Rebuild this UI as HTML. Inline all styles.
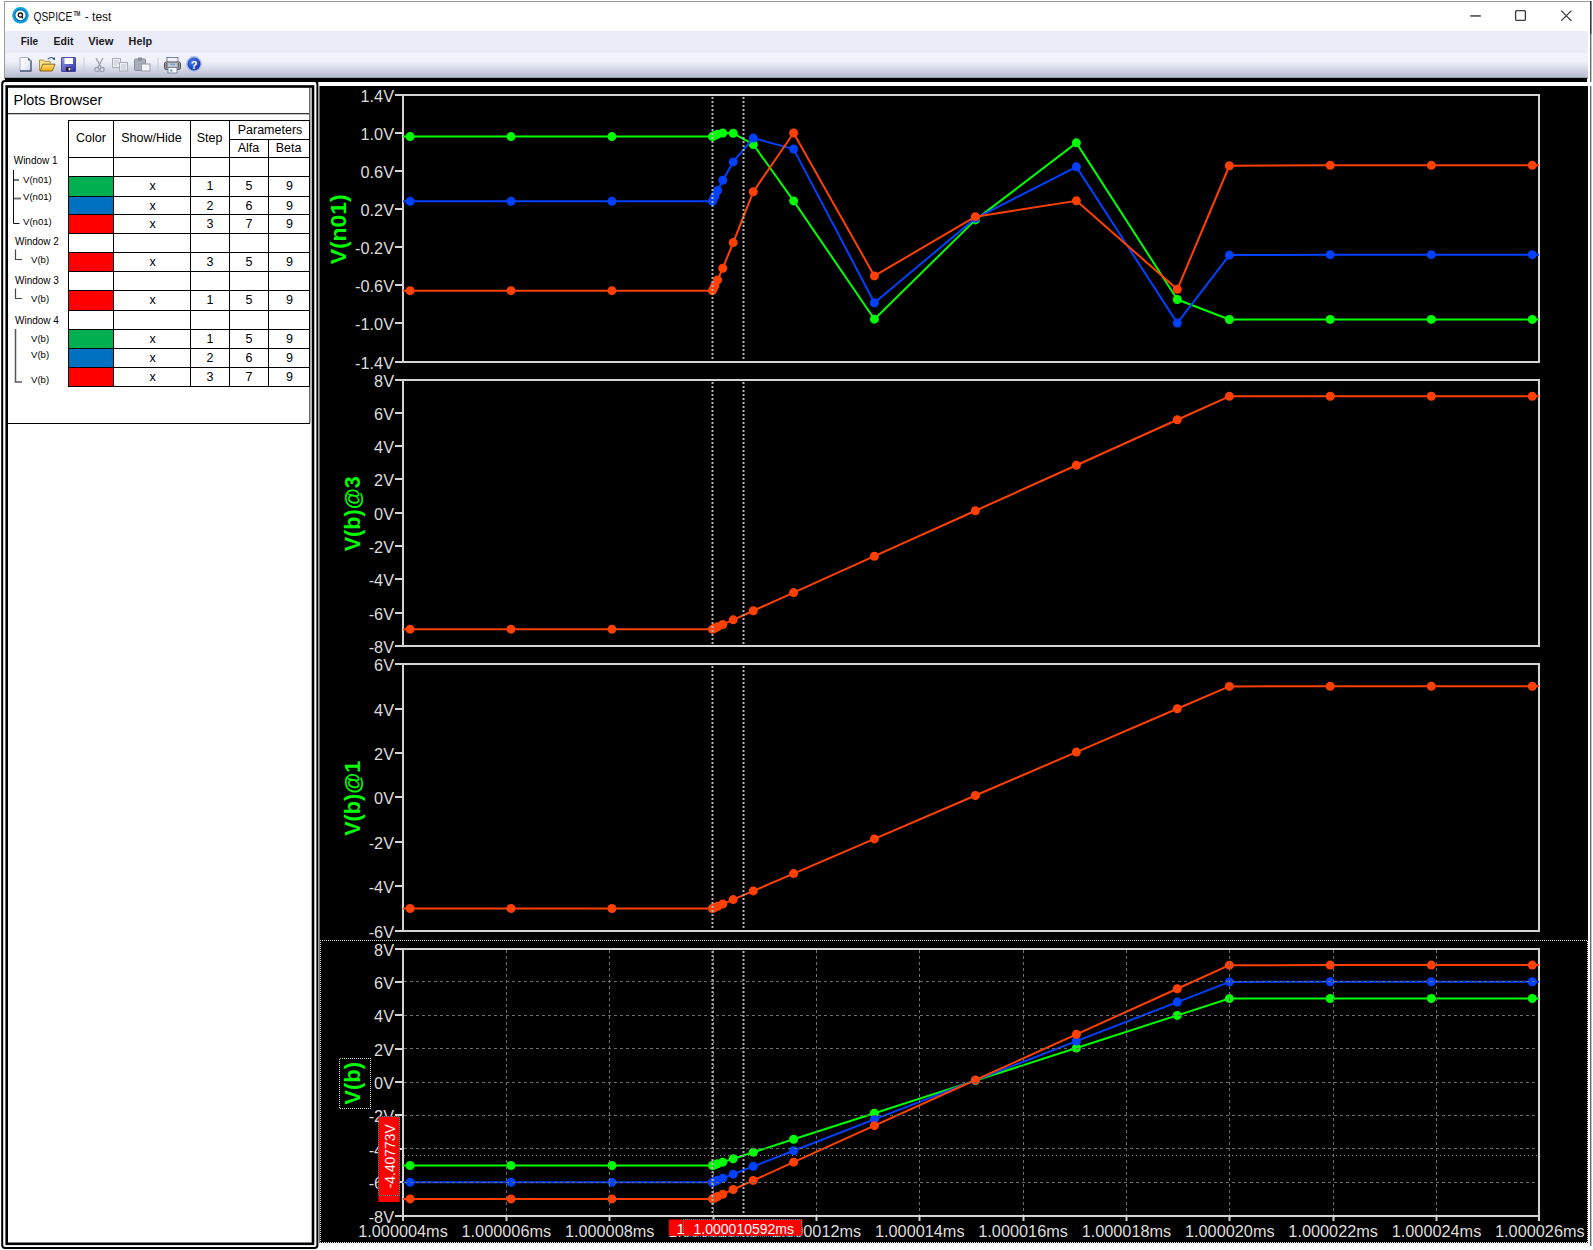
<!DOCTYPE html>
<html><head><meta charset="utf-8"><title>QSPICE - test</title>
<style>html,body{margin:0;padding:0;width:1593px;height:1250px;overflow:hidden;background:#fff;font-family:"Liberation Sans", sans-serif}</style>
</head><body>
<svg width="1593" height="1250" viewBox="0 0 1593 1250" style="position:absolute;left:0;top:0">
<defs><linearGradient id="tb" x1="0" y1="0" x2="0" y2="1"><stop offset="0" stop-color="#f4f6fb"/><stop offset="0.35" stop-color="#eef0f8"/><stop offset="0.75" stop-color="#c9ccdc"/><stop offset="1" stop-color="#b3b7cd"/></linearGradient><pattern id="dw" x="0" y="0" width="2" height="2" patternUnits="userSpaceOnUse"><rect x="0" y="0" width="1" height="1" fill="#dcdcdc"/><rect x="1" y="1" width="1" height="1" fill="#dcdcdc"/></pattern><pattern id="dc" x="0" y="0" width="2" height="2" patternUnits="userSpaceOnUse"><rect x="0" y="0" width="1" height="1" fill="#2a9aa8"/><rect x="1" y="1" width="1" height="1" fill="#2a9aa8"/></pattern><clipPath id="pc"><rect x="320" y="86" width="1268" height="1157"/></clipPath></defs>
<rect x="0" y="0" width="1593" height="1250" fill="#ffffff"/>
<rect x="4" y="1" width="1587" height="1" fill="#9a9a9a"/>
<rect x="4" y="1" width="1" height="78" fill="#9a9a9a"/>
<circle cx="20.5" cy="15.3" r="8.3" fill="#0ea2e4"/><circle cx="20.5" cy="15.3" r="5.6" fill="none" stroke="#0a5c8a" stroke-width="1.2" opacity="0.7"/><circle cx="20.5" cy="15.3" r="4.9" fill="#fff"/><circle cx="20.4" cy="15.1" r="2.1" fill="none" stroke="#111" stroke-width="1.3"/><line x1="21.6" y1="16.6" x2="23" y2="18.3" stroke="#111" stroke-width="1.3"/>
<text x="33.6" y="20.6" font-family='"Liberation Sans", sans-serif' font-size="12.8" fill="#111" textLength="38.6" lengthAdjust="spacingAndGlyphs">QSPICE</text>
<text x="73.4" y="15.6" font-family='"Liberation Sans", sans-serif' font-size="7.5" font-weight="bold" fill="#333" textLength="7" lengthAdjust="spacingAndGlyphs">TM</text>
<text x="84.8" y="20.6" font-family='"Liberation Sans", sans-serif' font-size="12.8" fill="#111" textLength="26.6" lengthAdjust="spacingAndGlyphs">- test</text>
<rect x="1470.3" y="15.2" width="10.5" height="1.5" fill="#404040"/>
<rect x="1515.6" y="10.6" width="9.8" height="9.8" rx="1.2" fill="none" stroke="#383838" stroke-width="1.3"/>
<path d="M1561.2 10.6 L1571.4 20.8 M1571.4 10.6 L1561.2 20.8" stroke="#333" stroke-width="1.2"/>
<rect x="5" y="31" width="1583" height="22" fill="#eaecf8"/>
<text x="20.7" y="45.4" font-family='"Liberation Sans", sans-serif' font-size="11.3" font-weight="bold" fill="#1a1a1a" textLength="17.4" lengthAdjust="spacingAndGlyphs">File</text>
<text x="53.6" y="45.4" font-family='"Liberation Sans", sans-serif' font-size="11.3" font-weight="bold" fill="#1a1a1a" textLength="19.8" lengthAdjust="spacingAndGlyphs">Edit</text>
<text x="88.2" y="45.4" font-family='"Liberation Sans", sans-serif' font-size="11.3" font-weight="bold" fill="#1a1a1a" textLength="25.2" lengthAdjust="spacingAndGlyphs">View</text>
<text x="128.6" y="45.4" font-family='"Liberation Sans", sans-serif' font-size="11.3" font-weight="bold" fill="#1a1a1a" textLength="23.4" lengthAdjust="spacingAndGlyphs">Help</text>
<rect x="5" y="53" width="1583" height="26" fill="url(#tb)"/>
<rect x="5" y="77" width="1583" height="1" fill="#9a9cac"/>
<rect x="5" y="78" width="1582" height="4" fill="#000"/>
<defs><linearGradient id="docg" x1="0" y1="0" x2="1" y2="1"><stop offset="0" stop-color="#ffffff"/><stop offset="0.5" stop-color="#f4f6fc"/><stop offset="1" stop-color="#c8d2e8"/></linearGradient><linearGradient id="fldg" x1="0" y1="0" x2="0" y2="1"><stop offset="0" stop-color="#ffe27a"/><stop offset="1" stop-color="#f0a818"/></linearGradient><linearGradient id="flpg" x1="0" y1="0" x2="1" y2="1"><stop offset="0" stop-color="#9a9af0"/><stop offset="1" stop-color="#2a2aa8"/></linearGradient></defs>
<path d="M20 57.5 h8 l3 3 v10.5 h-11 z" fill="url(#docg)" stroke="#a8b4cc" stroke-width="1"/><path d="M31 60.5 v10.5 h-11" fill="none" stroke="#4a5a78" stroke-width="1.3"/><path d="M28 57.5 l3 3 h-3 z" fill="#4a5a78"/>
<path d="M39.5 70.5 V60 h4 l1.2 1.3 h5.3 v2.7" fill="#f6e08a" stroke="#a88a30" stroke-width="0.9"/><path d="M40 71 l2.8 -6.8 h12.2 l-2.8 6.8 z" fill="url(#fldg)" stroke="#7a5a10" stroke-width="0.9"/><path d="M47.8 59.2 q3 -3 5.8 -0.8" fill="none" stroke="#3a5a98" stroke-width="1.1"/><path d="M55 57.2 l-0.3 3 l-2.6 -1.4 z" fill="#23406e"/>
<rect x="61.5" y="57.5" width="14" height="14" rx="0.5" fill="url(#flpg)" stroke="#3030a0" stroke-width="0.8"/><rect x="64.5" y="58" width="8.5" height="6" fill="#fff"/><rect x="66" y="67" width="5" height="4.2" fill="#222"/><rect x="68.6" y="67.8" width="1.8" height="2.6" fill="#f4f4f4"/>
<rect x="83.5" y="57.5" width="1" height="16" fill="#c8cad8"/>
<rect x="157.5" y="57.5" width="1" height="16" fill="#c8cad8"/>
<path d="M96 58 l5 9 M103 58 l-5 9" stroke="#9aa0ac" stroke-width="1.3"/><circle cx="97" cy="69.5" r="2.2" fill="none" stroke="#9aa0ac" stroke-width="1.2"/><circle cx="102" cy="69.5" r="2.2" fill="none" stroke="#9aa0ac" stroke-width="1.2"/>
<rect x="112.5" y="58.5" width="8" height="9" fill="#eceef2" stroke="#a8acb6"/><path d="M114 61h5 M114 63h5 M114 65h3" stroke="#b8bcc6" stroke-width="0.8"/><rect x="119.5" y="62.5" width="8" height="8.5" fill="#eceef2" stroke="#a8acb6"/><path d="M121 65h5 M121 67h5 M121 69h5" stroke="#b8bcc6" stroke-width="0.8"/>
<rect x="134.5" y="59" width="11" height="11.5" rx="1" fill="#a8acb8" stroke="#8a8e9a"/><rect x="138" y="57.5" width="4" height="3" fill="#8a8e9a"/><rect x="141.5" y="64" width="8.5" height="7" fill="#f4f4f6" stroke="#9a9ea8"/>
<rect x="167" y="57.5" width="11" height="5" fill="#f0f2f6" stroke="#6a7a90" stroke-width="0.9"/><rect x="164.5" y="62" width="16" height="7.5" rx="1.8" fill="#c4c6cc" stroke="#4a4a50" stroke-width="1"/><rect x="165.5" y="63" width="2" height="5.5" fill="#6a6a70"/><rect x="177.5" y="63" width="2" height="5.5" fill="#6a6a70"/><rect x="168" y="67.5" width="9" height="5.5" fill="#fff" stroke="#6a7a90" stroke-width="0.9"/><rect x="170.5" y="63.5" width="4.5" height="1.6" fill="#60a8e8"/><rect x="170" y="69.5" width="2.5" height="2" fill="#5aa0e0"/>
<defs><radialGradient id="hg" cx="0.4" cy="0.35" r="0.7"><stop offset="0" stop-color="#4a7af0"/><stop offset="1" stop-color="#0a2aa8"/></radialGradient></defs><circle cx="194" cy="64" r="7.2" fill="url(#hg)" stroke="#a8c0e8" stroke-width="1.4"/><text x="194" y="68.5" text-anchor="middle" font-family='"Liberation Sans", sans-serif' font-weight="bold" font-size="11" fill="#fff">?</text>
<rect x="2.2" y="81" width="315.2" height="1166.9" rx="3" fill="#fff" stroke="#000" stroke-width="2"/>
<rect x="6.7" y="86.5" width="306.3" height="1157.3" fill="#fff" stroke="#000" stroke-width="2.6"/>
<rect x="309" y="88" width="1.5" height="335" fill="#6a6a6a"/>
<rect x="8" y="423" width="302" height="1" fill="#000"/>
<text x="13.6" y="105.2" font-family='"Liberation Sans", sans-serif' font-size="14.2" fill="#000" textLength="88.6" lengthAdjust="spacingAndGlyphs">Plots Browser</text>
<rect x="8" y="113" width="301" height="1.3" fill="#333"/>
<rect x="68" y="176" width="45" height="20" fill="#00b050"/>
<rect x="68" y="196" width="45" height="18" fill="#0070c0"/>
<rect x="68" y="214" width="45" height="19" fill="#ff0000"/>
<rect x="68" y="252" width="45" height="19" fill="#ff0000"/>
<rect x="68" y="290" width="45" height="20" fill="#ff0000"/>
<rect x="68" y="329" width="45" height="19" fill="#00b050"/>
<rect x="68" y="348" width="45" height="19" fill="#0070c0"/>
<rect x="68" y="367" width="45" height="19" fill="#ff0000"/>
<rect x="68" y="120" width="242" height="1" fill="#000"/>
<rect x="68" y="157" width="242" height="1" fill="#000"/>
<rect x="68" y="176" width="242" height="1" fill="#000"/>
<rect x="68" y="196" width="242" height="1" fill="#000"/>
<rect x="68" y="214" width="242" height="1" fill="#000"/>
<rect x="68" y="233" width="242" height="1" fill="#000"/>
<rect x="68" y="252" width="242" height="1" fill="#000"/>
<rect x="68" y="271" width="242" height="1" fill="#000"/>
<rect x="68" y="290" width="242" height="1" fill="#000"/>
<rect x="68" y="310" width="242" height="1" fill="#000"/>
<rect x="68" y="329" width="242" height="1" fill="#000"/>
<rect x="68" y="348" width="242" height="1" fill="#000"/>
<rect x="68" y="367" width="242" height="1" fill="#000"/>
<rect x="68" y="386" width="242" height="1" fill="#000"/>
<rect x="68" y="120" width="1" height="267" fill="#000"/>
<rect x="113" y="120" width="1" height="267" fill="#000"/>
<rect x="190" y="120" width="1" height="267" fill="#000"/>
<rect x="229" y="120" width="1" height="267" fill="#000"/>
<rect x="268" y="120" width="1" height="267" fill="#000"/>
<rect x="309" y="120" width="1" height="267" fill="#000"/>
<rect x="229" y="139" width="80" height="1" fill="#000"/>
<rect x="268" y="121" width="1" height="18" fill="#fff"/>
<text x="91.0" y="142.2" text-anchor="middle" font-family='"Liberation Sans", sans-serif' font-size="12.5" fill="#000">Color</text>
<text x="151.5" y="142.2" text-anchor="middle" font-family='"Liberation Sans", sans-serif' font-size="12.5" fill="#000">Show/Hide</text>
<text x="209.5" y="142.2" text-anchor="middle" font-family='"Liberation Sans", sans-serif' font-size="12.5" fill="#000">Step</text>
<text x="270.0" y="134" text-anchor="middle" font-family='"Liberation Sans", sans-serif' font-size="12.5" fill="#000">Parameters</text>
<text x="248.5" y="152" text-anchor="middle" font-family='"Liberation Sans", sans-serif' font-size="12.5" fill="#000">Alfa</text>
<text x="288.5" y="152" text-anchor="middle" font-family='"Liberation Sans", sans-serif' font-size="12.5" fill="#000">Beta</text>
<text x="152.5" y="190" text-anchor="middle" font-family='"Liberation Sans", sans-serif' font-size="12.5" fill="#000">x</text>
<text x="210.0" y="190" text-anchor="middle" font-family='"Liberation Sans", sans-serif' font-size="12.5" fill="#000">1</text>
<text x="249.0" y="190" text-anchor="middle" font-family='"Liberation Sans", sans-serif' font-size="12.5" fill="#000">5</text>
<text x="289.5" y="190" text-anchor="middle" font-family='"Liberation Sans", sans-serif' font-size="12.5" fill="#000">9</text>
<text x="152.5" y="210" text-anchor="middle" font-family='"Liberation Sans", sans-serif' font-size="12.5" fill="#000">x</text>
<text x="210.0" y="210" text-anchor="middle" font-family='"Liberation Sans", sans-serif' font-size="12.5" fill="#000">2</text>
<text x="249.0" y="210" text-anchor="middle" font-family='"Liberation Sans", sans-serif' font-size="12.5" fill="#000">6</text>
<text x="289.5" y="210" text-anchor="middle" font-family='"Liberation Sans", sans-serif' font-size="12.5" fill="#000">9</text>
<text x="152.5" y="228" text-anchor="middle" font-family='"Liberation Sans", sans-serif' font-size="12.5" fill="#000">x</text>
<text x="210.0" y="228" text-anchor="middle" font-family='"Liberation Sans", sans-serif' font-size="12.5" fill="#000">3</text>
<text x="249.0" y="228" text-anchor="middle" font-family='"Liberation Sans", sans-serif' font-size="12.5" fill="#000">7</text>
<text x="289.5" y="228" text-anchor="middle" font-family='"Liberation Sans", sans-serif' font-size="12.5" fill="#000">9</text>
<text x="152.5" y="266" text-anchor="middle" font-family='"Liberation Sans", sans-serif' font-size="12.5" fill="#000">x</text>
<text x="210.0" y="266" text-anchor="middle" font-family='"Liberation Sans", sans-serif' font-size="12.5" fill="#000">3</text>
<text x="249.0" y="266" text-anchor="middle" font-family='"Liberation Sans", sans-serif' font-size="12.5" fill="#000">5</text>
<text x="289.5" y="266" text-anchor="middle" font-family='"Liberation Sans", sans-serif' font-size="12.5" fill="#000">9</text>
<text x="152.5" y="304" text-anchor="middle" font-family='"Liberation Sans", sans-serif' font-size="12.5" fill="#000">x</text>
<text x="210.0" y="304" text-anchor="middle" font-family='"Liberation Sans", sans-serif' font-size="12.5" fill="#000">1</text>
<text x="249.0" y="304" text-anchor="middle" font-family='"Liberation Sans", sans-serif' font-size="12.5" fill="#000">5</text>
<text x="289.5" y="304" text-anchor="middle" font-family='"Liberation Sans", sans-serif' font-size="12.5" fill="#000">9</text>
<text x="152.5" y="343" text-anchor="middle" font-family='"Liberation Sans", sans-serif' font-size="12.5" fill="#000">x</text>
<text x="210.0" y="343" text-anchor="middle" font-family='"Liberation Sans", sans-serif' font-size="12.5" fill="#000">1</text>
<text x="249.0" y="343" text-anchor="middle" font-family='"Liberation Sans", sans-serif' font-size="12.5" fill="#000">5</text>
<text x="289.5" y="343" text-anchor="middle" font-family='"Liberation Sans", sans-serif' font-size="12.5" fill="#000">9</text>
<text x="152.5" y="362" text-anchor="middle" font-family='"Liberation Sans", sans-serif' font-size="12.5" fill="#000">x</text>
<text x="210.0" y="362" text-anchor="middle" font-family='"Liberation Sans", sans-serif' font-size="12.5" fill="#000">2</text>
<text x="249.0" y="362" text-anchor="middle" font-family='"Liberation Sans", sans-serif' font-size="12.5" fill="#000">6</text>
<text x="289.5" y="362" text-anchor="middle" font-family='"Liberation Sans", sans-serif' font-size="12.5" fill="#000">9</text>
<text x="152.5" y="381" text-anchor="middle" font-family='"Liberation Sans", sans-serif' font-size="12.5" fill="#000">x</text>
<text x="210.0" y="381" text-anchor="middle" font-family='"Liberation Sans", sans-serif' font-size="12.5" fill="#000">3</text>
<text x="249.0" y="381" text-anchor="middle" font-family='"Liberation Sans", sans-serif' font-size="12.5" fill="#000">7</text>
<text x="289.5" y="381" text-anchor="middle" font-family='"Liberation Sans", sans-serif' font-size="12.5" fill="#000">9</text>
<text x="13.7" y="163.5" font-family='"Liberation Sans", sans-serif' font-size="10" fill="#000">Window 1</text>
<text x="23" y="183.4" font-family='"Liberation Sans", sans-serif' font-size="9.6" fill="#000">V(n01)</text>
<text x="23" y="200.2" font-family='"Liberation Sans", sans-serif' font-size="9.6" fill="#000">V(n01)</text>
<text x="23" y="225.1" font-family='"Liberation Sans", sans-serif' font-size="9.6" fill="#000">V(n01)</text>
<path d="M13.5 170 V223.5 H19.5" fill="none" stroke="#111" stroke-width="1"/><path d="M14 180 H19 M14 198.5 H21" fill="none" stroke="#777" stroke-width="2"/>
<text x="15" y="244.5" font-family='"Liberation Sans", sans-serif' font-size="10" fill="#000">Window 2</text>
<text x="31" y="263" font-family='"Liberation Sans", sans-serif' font-size="9.6" fill="#000">V(b)</text>
<path d="M15.5 249.5 V259.5 H22" fill="none" stroke="#444" stroke-width="1.2"/>
<text x="15" y="283.5" font-family='"Liberation Sans", sans-serif' font-size="10" fill="#000">Window 3</text>
<text x="31" y="302" font-family='"Liberation Sans", sans-serif' font-size="9.6" fill="#000">V(b)</text>
<path d="M15.5 288.5 V298.5 H22" fill="none" stroke="#444" stroke-width="1.2"/>
<text x="15" y="323.5" font-family='"Liberation Sans", sans-serif' font-size="10" fill="#000">Window 4</text>
<text x="31" y="342" font-family='"Liberation Sans", sans-serif' font-size="9.6" fill="#000">V(b)</text>
<text x="31" y="358" font-family='"Liberation Sans", sans-serif' font-size="9.6" fill="#000">V(b)</text>
<text x="31" y="382.5" font-family='"Liberation Sans", sans-serif' font-size="9.6" fill="#000">V(b)</text>
<path d="M15.5 329 V382 H22" fill="none" stroke="#555" stroke-width="1.5"/>
<rect x="319" y="86" width="1269" height="1157" fill="#000"/>
<rect x="319" y="86" width="1" height="1157" fill="#777"/>
<rect x="1590" y="1" width="1.4" height="1245" fill="#6a6a6a"/><rect x="1590" y="1" width="1.4" height="33" fill="#3a3a3a"/><rect x="1589" y="82" width="4" height="4" fill="#fff"/>
<g clip-path="url(#pc)">
<rect x="403" y="95" width="1136" height="267" fill="none" stroke="#d4d4d4" stroke-width="2"/>
<line x1="395" y1="95" x2="403" y2="95" stroke="#d4d4d4" stroke-width="2"/>
<text x="394" y="101.50" text-anchor="end" font-family='"Liberation Sans", sans-serif' font-size="16.3" fill="#dcdcdc">1.4V</text>
<line x1="395" y1="133" x2="403" y2="133" stroke="#d4d4d4" stroke-width="2"/>
<text x="394" y="139.50" text-anchor="end" font-family='"Liberation Sans", sans-serif' font-size="16.3" fill="#dcdcdc">1.0V</text>
<line x1="395" y1="171" x2="403" y2="171" stroke="#d4d4d4" stroke-width="2"/>
<text x="394" y="177.50" text-anchor="end" font-family='"Liberation Sans", sans-serif' font-size="16.3" fill="#dcdcdc">0.6V</text>
<line x1="395" y1="209" x2="403" y2="209" stroke="#d4d4d4" stroke-width="2"/>
<text x="394" y="215.50" text-anchor="end" font-family='"Liberation Sans", sans-serif' font-size="16.3" fill="#dcdcdc">0.2V</text>
<line x1="395" y1="247" x2="403" y2="247" stroke="#d4d4d4" stroke-width="2"/>
<text x="394" y="253.50" text-anchor="end" font-family='"Liberation Sans", sans-serif' font-size="16.3" fill="#dcdcdc">-0.2V</text>
<line x1="395" y1="285" x2="403" y2="285" stroke="#d4d4d4" stroke-width="2"/>
<text x="394" y="291.50" text-anchor="end" font-family='"Liberation Sans", sans-serif' font-size="16.3" fill="#dcdcdc">-0.6V</text>
<line x1="395" y1="323" x2="403" y2="323" stroke="#d4d4d4" stroke-width="2"/>
<text x="394" y="329.50" text-anchor="end" font-family='"Liberation Sans", sans-serif' font-size="16.3" fill="#dcdcdc">-1.0V</text>
<line x1="395" y1="362" x2="403" y2="362" stroke="#d4d4d4" stroke-width="2"/>
<text x="394" y="368.50" text-anchor="end" font-family='"Liberation Sans", sans-serif' font-size="16.3" fill="#dcdcdc">-1.4V</text>
<text x="0" y="0" transform="translate(346.2,229.3) rotate(-90)" text-anchor="middle" font-family='"Liberation Sans", sans-serif' font-weight="bold" font-size="22" fill="#00ff00" textLength="70" lengthAdjust="spacingAndGlyphs">V(n01)</text>
<polyline points="403.00,136.56 410.10,136.56 511.00,136.56 611.90,136.56 712.40,136.56 713.70,135.91 715.00,135.31 717.60,134.30 722.80,133.00 733.20,133.27 753.30,144.46 793.60,200.88 874.40,319.19 975.40,219.90 1076.40,142.86 1177.30,299.47 1229.40,319.55 1330.20,319.44 1431.30,319.44 1532.30,319.44 1539.00,319.44" fill="none" stroke="#00ff00" stroke-width="2" stroke-linejoin="round"/>
<circle cx="410.10" cy="136.56" r="4.5" fill="#00ff00"/>
<circle cx="511.00" cy="136.56" r="4.5" fill="#00ff00"/>
<circle cx="611.90" cy="136.56" r="4.5" fill="#00ff00"/>
<circle cx="712.40" cy="136.56" r="4.5" fill="#00ff00"/>
<circle cx="713.70" cy="135.91" r="4.5" fill="#00ff00"/>
<circle cx="715.00" cy="135.31" r="4.5" fill="#00ff00"/>
<circle cx="717.60" cy="134.30" r="4.5" fill="#00ff00"/>
<circle cx="722.80" cy="133.00" r="4.5" fill="#00ff00"/>
<circle cx="733.20" cy="133.27" r="4.5" fill="#00ff00"/>
<circle cx="753.30" cy="144.46" r="4.5" fill="#00ff00"/>
<circle cx="793.60" cy="200.88" r="4.5" fill="#00ff00"/>
<circle cx="874.40" cy="319.19" r="4.5" fill="#00ff00"/>
<circle cx="975.40" cy="219.90" r="4.5" fill="#00ff00"/>
<circle cx="1076.40" cy="142.86" r="4.5" fill="#00ff00"/>
<circle cx="1177.30" cy="299.47" r="4.5" fill="#00ff00"/>
<circle cx="1229.40" cy="319.55" r="4.5" fill="#00ff00"/>
<circle cx="1330.20" cy="319.44" r="4.5" fill="#00ff00"/>
<circle cx="1431.30" cy="319.44" r="4.5" fill="#00ff00"/>
<circle cx="1532.30" cy="319.44" r="4.5" fill="#00ff00"/>
<polyline points="403.00,201.35 410.10,201.35 511.00,201.35 611.90,201.35 712.40,201.35 713.70,198.61 715.00,195.88 717.60,190.53 722.80,180.25 733.20,161.91 753.30,138.06 793.60,149.10 874.40,302.72 975.40,218.28 1076.40,166.85 1177.30,323.10 1229.40,255.07 1330.20,254.65 1431.30,254.65 1532.30,254.65 1539.00,254.65" fill="none" stroke="#0040ff" stroke-width="2" stroke-linejoin="round"/>
<circle cx="410.10" cy="201.35" r="4.5" fill="#0040ff"/>
<circle cx="511.00" cy="201.35" r="4.5" fill="#0040ff"/>
<circle cx="611.90" cy="201.35" r="4.5" fill="#0040ff"/>
<circle cx="712.40" cy="201.35" r="4.5" fill="#0040ff"/>
<circle cx="713.70" cy="198.61" r="4.5" fill="#0040ff"/>
<circle cx="715.00" cy="195.88" r="4.5" fill="#0040ff"/>
<circle cx="717.60" cy="190.53" r="4.5" fill="#0040ff"/>
<circle cx="722.80" cy="180.25" r="4.5" fill="#0040ff"/>
<circle cx="733.20" cy="161.91" r="4.5" fill="#0040ff"/>
<circle cx="753.30" cy="138.06" r="4.5" fill="#0040ff"/>
<circle cx="793.60" cy="149.10" r="4.5" fill="#0040ff"/>
<circle cx="874.40" cy="302.72" r="4.5" fill="#0040ff"/>
<circle cx="975.40" cy="218.28" r="4.5" fill="#0040ff"/>
<circle cx="1076.40" cy="166.85" r="4.5" fill="#0040ff"/>
<circle cx="1177.30" cy="323.10" r="4.5" fill="#0040ff"/>
<circle cx="1229.40" cy="255.07" r="4.5" fill="#0040ff"/>
<circle cx="1330.20" cy="254.65" r="4.5" fill="#0040ff"/>
<circle cx="1431.30" cy="254.65" r="4.5" fill="#0040ff"/>
<circle cx="1532.30" cy="254.65" r="4.5" fill="#0040ff"/>
<polyline points="403.00,290.65 410.10,290.65 511.00,290.65 611.90,290.65 712.40,290.65 713.70,288.08 715.00,285.44 717.60,279.94 722.80,268.21 733.20,242.61 753.30,191.72 793.60,133.02 874.40,275.94 975.40,216.67 1076.40,200.87 1177.30,289.35 1229.40,165.74 1330.20,165.35 1431.30,165.35 1532.30,165.35 1539.00,165.35" fill="none" stroke="#ff4000" stroke-width="2" stroke-linejoin="round"/>
<circle cx="410.10" cy="290.65" r="4.5" fill="#ff4000"/>
<circle cx="511.00" cy="290.65" r="4.5" fill="#ff4000"/>
<circle cx="611.90" cy="290.65" r="4.5" fill="#ff4000"/>
<circle cx="712.40" cy="290.65" r="4.5" fill="#ff4000"/>
<circle cx="713.70" cy="288.08" r="4.5" fill="#ff4000"/>
<circle cx="715.00" cy="285.44" r="4.5" fill="#ff4000"/>
<circle cx="717.60" cy="279.94" r="4.5" fill="#ff4000"/>
<circle cx="722.80" cy="268.21" r="4.5" fill="#ff4000"/>
<circle cx="733.20" cy="242.61" r="4.5" fill="#ff4000"/>
<circle cx="753.30" cy="191.72" r="4.5" fill="#ff4000"/>
<circle cx="793.60" cy="133.02" r="4.5" fill="#ff4000"/>
<circle cx="874.40" cy="275.94" r="4.5" fill="#ff4000"/>
<circle cx="975.40" cy="216.67" r="4.5" fill="#ff4000"/>
<circle cx="1076.40" cy="200.87" r="4.5" fill="#ff4000"/>
<circle cx="1177.30" cy="289.35" r="4.5" fill="#ff4000"/>
<circle cx="1229.40" cy="165.74" r="4.5" fill="#ff4000"/>
<circle cx="1330.20" cy="165.35" r="4.5" fill="#ff4000"/>
<circle cx="1431.30" cy="165.35" r="4.5" fill="#ff4000"/>
<circle cx="1532.30" cy="165.35" r="4.5" fill="#ff4000"/>
<line x1="712.5" y1="97" x2="712.5" y2="361" stroke="#b4b4b4" stroke-width="2" stroke-dasharray="2 2"/>
<line x1="743.5" y1="97" x2="743.5" y2="361" stroke="#b4b4b4" stroke-width="2" stroke-dasharray="2 2"/>
<rect x="403" y="380" width="1136" height="266" fill="none" stroke="#d4d4d4" stroke-width="2"/>
<line x1="395" y1="380" x2="403" y2="380" stroke="#d4d4d4" stroke-width="2"/>
<text x="394" y="386.50" text-anchor="end" font-family='"Liberation Sans", sans-serif' font-size="16.3" fill="#dcdcdc">8V</text>
<line x1="395" y1="413" x2="403" y2="413" stroke="#d4d4d4" stroke-width="2"/>
<text x="394" y="419.50" text-anchor="end" font-family='"Liberation Sans", sans-serif' font-size="16.3" fill="#dcdcdc">6V</text>
<line x1="395" y1="446" x2="403" y2="446" stroke="#d4d4d4" stroke-width="2"/>
<text x="394" y="452.50" text-anchor="end" font-family='"Liberation Sans", sans-serif' font-size="16.3" fill="#dcdcdc">4V</text>
<line x1="395" y1="479" x2="403" y2="479" stroke="#d4d4d4" stroke-width="2"/>
<text x="394" y="485.50" text-anchor="end" font-family='"Liberation Sans", sans-serif' font-size="16.3" fill="#dcdcdc">2V</text>
<line x1="395" y1="513" x2="403" y2="513" stroke="#d4d4d4" stroke-width="2"/>
<text x="394" y="519.50" text-anchor="end" font-family='"Liberation Sans", sans-serif' font-size="16.3" fill="#dcdcdc">0V</text>
<line x1="395" y1="546" x2="403" y2="546" stroke="#d4d4d4" stroke-width="2"/>
<text x="394" y="552.50" text-anchor="end" font-family='"Liberation Sans", sans-serif' font-size="16.3" fill="#dcdcdc">-2V</text>
<line x1="395" y1="579" x2="403" y2="579" stroke="#d4d4d4" stroke-width="2"/>
<text x="394" y="585.50" text-anchor="end" font-family='"Liberation Sans", sans-serif' font-size="16.3" fill="#dcdcdc">-4V</text>
<line x1="395" y1="613" x2="403" y2="613" stroke="#d4d4d4" stroke-width="2"/>
<text x="394" y="619.50" text-anchor="end" font-family='"Liberation Sans", sans-serif' font-size="16.3" fill="#dcdcdc">-6V</text>
<line x1="395" y1="646" x2="403" y2="646" stroke="#d4d4d4" stroke-width="2"/>
<text x="394" y="652.50" text-anchor="end" font-family='"Liberation Sans", sans-serif' font-size="16.3" fill="#dcdcdc">-8V</text>
<text x="0" y="0" transform="translate(360.0,513.8) rotate(-90)" text-anchor="middle" font-family='"Liberation Sans", sans-serif' font-weight="bold" font-size="22" fill="#00ff00" textLength="75" lengthAdjust="spacingAndGlyphs">V(b)@3</text>
<polyline points="403.00,629.18 410.10,629.18 511.00,629.18 611.90,629.18 712.40,629.18 713.70,628.59 715.00,628.01 717.60,626.84 722.80,624.50 733.20,619.81 753.30,610.76 793.60,592.61 874.40,556.21 975.40,510.72 1076.40,465.23 1177.30,419.78 1229.40,396.31 1330.20,396.22 1431.30,396.22 1532.30,396.22 1539.00,396.22" fill="none" stroke="#ff4000" stroke-width="2" stroke-linejoin="round"/>
<circle cx="410.10" cy="629.18" r="4.5" fill="#ff4000"/>
<circle cx="511.00" cy="629.18" r="4.5" fill="#ff4000"/>
<circle cx="611.90" cy="629.18" r="4.5" fill="#ff4000"/>
<circle cx="712.40" cy="629.18" r="4.5" fill="#ff4000"/>
<circle cx="713.70" cy="628.59" r="4.5" fill="#ff4000"/>
<circle cx="715.00" cy="628.01" r="4.5" fill="#ff4000"/>
<circle cx="717.60" cy="626.84" r="4.5" fill="#ff4000"/>
<circle cx="722.80" cy="624.50" r="4.5" fill="#ff4000"/>
<circle cx="733.20" cy="619.81" r="4.5" fill="#ff4000"/>
<circle cx="753.30" cy="610.76" r="4.5" fill="#ff4000"/>
<circle cx="793.60" cy="592.61" r="4.5" fill="#ff4000"/>
<circle cx="874.40" cy="556.21" r="4.5" fill="#ff4000"/>
<circle cx="975.40" cy="510.72" r="4.5" fill="#ff4000"/>
<circle cx="1076.40" cy="465.23" r="4.5" fill="#ff4000"/>
<circle cx="1177.30" cy="419.78" r="4.5" fill="#ff4000"/>
<circle cx="1229.40" cy="396.31" r="4.5" fill="#ff4000"/>
<circle cx="1330.20" cy="396.22" r="4.5" fill="#ff4000"/>
<circle cx="1431.30" cy="396.22" r="4.5" fill="#ff4000"/>
<circle cx="1532.30" cy="396.22" r="4.5" fill="#ff4000"/>
<line x1="712.5" y1="382" x2="712.5" y2="645" stroke="#b4b4b4" stroke-width="2" stroke-dasharray="2 2"/>
<line x1="743.5" y1="382" x2="743.5" y2="645" stroke="#b4b4b4" stroke-width="2" stroke-dasharray="2 2"/>
<rect x="403" y="664" width="1136" height="267" fill="none" stroke="#d4d4d4" stroke-width="2"/>
<line x1="395" y1="664" x2="403" y2="664" stroke="#d4d4d4" stroke-width="2"/>
<text x="394" y="670.50" text-anchor="end" font-family='"Liberation Sans", sans-serif' font-size="16.3" fill="#dcdcdc">6V</text>
<line x1="395" y1="709" x2="403" y2="709" stroke="#d4d4d4" stroke-width="2"/>
<text x="394" y="715.50" text-anchor="end" font-family='"Liberation Sans", sans-serif' font-size="16.3" fill="#dcdcdc">4V</text>
<line x1="395" y1="753" x2="403" y2="753" stroke="#d4d4d4" stroke-width="2"/>
<text x="394" y="759.50" text-anchor="end" font-family='"Liberation Sans", sans-serif' font-size="16.3" fill="#dcdcdc">2V</text>
<line x1="395" y1="797" x2="403" y2="797" stroke="#d4d4d4" stroke-width="2"/>
<text x="394" y="803.50" text-anchor="end" font-family='"Liberation Sans", sans-serif' font-size="16.3" fill="#dcdcdc">0V</text>
<line x1="395" y1="842" x2="403" y2="842" stroke="#d4d4d4" stroke-width="2"/>
<text x="394" y="848.50" text-anchor="end" font-family='"Liberation Sans", sans-serif' font-size="16.3" fill="#dcdcdc">-2V</text>
<line x1="395" y1="886" x2="403" y2="886" stroke="#d4d4d4" stroke-width="2"/>
<text x="394" y="892.50" text-anchor="end" font-family='"Liberation Sans", sans-serif' font-size="16.3" fill="#dcdcdc">-4V</text>
<line x1="395" y1="931" x2="403" y2="931" stroke="#d4d4d4" stroke-width="2"/>
<text x="394" y="937.50" text-anchor="end" font-family='"Liberation Sans", sans-serif' font-size="16.3" fill="#dcdcdc">-6V</text>
<text x="0" y="0" transform="translate(360.0,798.3) rotate(-90)" text-anchor="middle" font-family='"Liberation Sans", sans-serif' font-weight="bold" font-size="22" fill="#00ff00" textLength="75" lengthAdjust="spacingAndGlyphs">V(b)@1</text>
<polyline points="403.00,908.50 410.10,908.50 511.00,908.50 611.90,908.50 712.40,908.50 713.70,907.94 715.00,907.38 717.60,906.27 722.80,904.03 733.20,899.56 753.30,890.93 793.60,873.61 874.40,838.90 975.40,795.51 1076.40,752.12 1177.30,708.77 1229.40,686.39 1330.20,686.30 1431.30,686.30 1532.30,686.30 1539.00,686.30" fill="none" stroke="#ff4000" stroke-width="2" stroke-linejoin="round"/>
<circle cx="410.10" cy="908.50" r="4.5" fill="#ff4000"/>
<circle cx="511.00" cy="908.50" r="4.5" fill="#ff4000"/>
<circle cx="611.90" cy="908.50" r="4.5" fill="#ff4000"/>
<circle cx="712.40" cy="908.50" r="4.5" fill="#ff4000"/>
<circle cx="713.70" cy="907.94" r="4.5" fill="#ff4000"/>
<circle cx="715.00" cy="907.38" r="4.5" fill="#ff4000"/>
<circle cx="717.60" cy="906.27" r="4.5" fill="#ff4000"/>
<circle cx="722.80" cy="904.03" r="4.5" fill="#ff4000"/>
<circle cx="733.20" cy="899.56" r="4.5" fill="#ff4000"/>
<circle cx="753.30" cy="890.93" r="4.5" fill="#ff4000"/>
<circle cx="793.60" cy="873.61" r="4.5" fill="#ff4000"/>
<circle cx="874.40" cy="838.90" r="4.5" fill="#ff4000"/>
<circle cx="975.40" cy="795.51" r="4.5" fill="#ff4000"/>
<circle cx="1076.40" cy="752.12" r="4.5" fill="#ff4000"/>
<circle cx="1177.30" cy="708.77" r="4.5" fill="#ff4000"/>
<circle cx="1229.40" cy="686.39" r="4.5" fill="#ff4000"/>
<circle cx="1330.20" cy="686.30" r="4.5" fill="#ff4000"/>
<circle cx="1431.30" cy="686.30" r="4.5" fill="#ff4000"/>
<circle cx="1532.30" cy="686.30" r="4.5" fill="#ff4000"/>
<line x1="712.5" y1="666" x2="712.5" y2="930" stroke="#b4b4b4" stroke-width="2" stroke-dasharray="2 2"/>
<line x1="743.5" y1="666" x2="743.5" y2="930" stroke="#b4b4b4" stroke-width="2" stroke-dasharray="2 2"/>
<rect x="403" y="949" width="1136" height="267" fill="none" stroke="#d4d4d4" stroke-width="2"/>
<line x1="395" y1="949" x2="403" y2="949" stroke="#d4d4d4" stroke-width="2"/>
<text x="394" y="955.50" text-anchor="end" font-family='"Liberation Sans", sans-serif' font-size="16.3" fill="#dcdcdc">8V</text>
<line x1="395" y1="982" x2="403" y2="982" stroke="#d4d4d4" stroke-width="2"/>
<text x="394" y="988.50" text-anchor="end" font-family='"Liberation Sans", sans-serif' font-size="16.3" fill="#dcdcdc">6V</text>
<line x1="395" y1="1015" x2="403" y2="1015" stroke="#d4d4d4" stroke-width="2"/>
<text x="394" y="1021.50" text-anchor="end" font-family='"Liberation Sans", sans-serif' font-size="16.3" fill="#dcdcdc">4V</text>
<line x1="395" y1="1049" x2="403" y2="1049" stroke="#d4d4d4" stroke-width="2"/>
<text x="394" y="1055.50" text-anchor="end" font-family='"Liberation Sans", sans-serif' font-size="16.3" fill="#dcdcdc">2V</text>
<line x1="395" y1="1082" x2="403" y2="1082" stroke="#d4d4d4" stroke-width="2"/>
<text x="394" y="1088.50" text-anchor="end" font-family='"Liberation Sans", sans-serif' font-size="16.3" fill="#dcdcdc">0V</text>
<line x1="395" y1="1115" x2="403" y2="1115" stroke="#d4d4d4" stroke-width="2"/>
<text x="394" y="1121.50" text-anchor="end" font-family='"Liberation Sans", sans-serif' font-size="16.3" fill="#dcdcdc">-2V</text>
<line x1="395" y1="1149" x2="403" y2="1149" stroke="#d4d4d4" stroke-width="2"/>
<text x="394" y="1155.50" text-anchor="end" font-family='"Liberation Sans", sans-serif' font-size="16.3" fill="#dcdcdc">-4V</text>
<line x1="395" y1="1182" x2="403" y2="1182" stroke="#d4d4d4" stroke-width="2"/>
<text x="394" y="1188.50" text-anchor="end" font-family='"Liberation Sans", sans-serif' font-size="16.3" fill="#dcdcdc">-6V</text>
<line x1="395" y1="1216" x2="403" y2="1216" stroke="#d4d4d4" stroke-width="2"/>
<text x="394" y="1222.50" text-anchor="end" font-family='"Liberation Sans", sans-serif' font-size="16.3" fill="#dcdcdc">-8V</text>
<text x="0" y="0" transform="translate(360.2,1083.3) rotate(-90)" text-anchor="middle" font-family='"Liberation Sans", sans-serif' font-weight="bold" font-size="22" fill="#00ff00" textLength="43" lengthAdjust="spacingAndGlyphs">V(b)</text>
<polyline points="403.00,1165.50 410.10,1165.50 511.00,1165.50 611.90,1165.50 712.40,1165.50 713.70,1165.08 715.00,1164.66 717.60,1163.82 722.80,1162.14 733.20,1158.78 753.30,1152.29 793.60,1139.28 874.40,1113.19 975.40,1080.58 1076.40,1047.97 1177.30,1015.39 1229.40,998.56 1330.20,998.50 1431.30,998.50 1532.30,998.50 1539.00,998.50" fill="none" stroke="#00ff00" stroke-width="2" stroke-linejoin="round"/>
<circle cx="410.10" cy="1165.50" r="4.5" fill="#00ff00"/>
<circle cx="511.00" cy="1165.50" r="4.5" fill="#00ff00"/>
<circle cx="611.90" cy="1165.50" r="4.5" fill="#00ff00"/>
<circle cx="712.40" cy="1165.50" r="4.5" fill="#00ff00"/>
<circle cx="713.70" cy="1165.08" r="4.5" fill="#00ff00"/>
<circle cx="715.00" cy="1164.66" r="4.5" fill="#00ff00"/>
<circle cx="717.60" cy="1163.82" r="4.5" fill="#00ff00"/>
<circle cx="722.80" cy="1162.14" r="4.5" fill="#00ff00"/>
<circle cx="733.20" cy="1158.78" r="4.5" fill="#00ff00"/>
<circle cx="753.30" cy="1152.29" r="4.5" fill="#00ff00"/>
<circle cx="793.60" cy="1139.28" r="4.5" fill="#00ff00"/>
<circle cx="874.40" cy="1113.19" r="4.5" fill="#00ff00"/>
<circle cx="975.40" cy="1080.58" r="4.5" fill="#00ff00"/>
<circle cx="1076.40" cy="1047.97" r="4.5" fill="#00ff00"/>
<circle cx="1177.30" cy="1015.39" r="4.5" fill="#00ff00"/>
<circle cx="1229.40" cy="998.56" r="4.5" fill="#00ff00"/>
<circle cx="1330.20" cy="998.50" r="4.5" fill="#00ff00"/>
<circle cx="1431.30" cy="998.50" r="4.5" fill="#00ff00"/>
<circle cx="1532.30" cy="998.50" r="4.5" fill="#00ff00"/>
<polyline points="403.00,1182.20 410.10,1182.20 511.00,1182.20 611.90,1182.20 712.40,1182.20 713.70,1181.70 715.00,1181.19 717.60,1180.19 722.80,1178.17 733.20,1174.14 753.30,1166.35 793.60,1150.74 874.40,1119.43 975.40,1080.30 1076.40,1041.16 1177.30,1002.06 1229.40,981.88 1330.20,981.80 1431.30,981.80 1532.30,981.80 1539.00,981.80" fill="none" stroke="#0040ff" stroke-width="2" stroke-linejoin="round"/>
<circle cx="410.10" cy="1182.20" r="4.5" fill="#0040ff"/>
<circle cx="511.00" cy="1182.20" r="4.5" fill="#0040ff"/>
<circle cx="611.90" cy="1182.20" r="4.5" fill="#0040ff"/>
<circle cx="712.40" cy="1182.20" r="4.5" fill="#0040ff"/>
<circle cx="713.70" cy="1181.70" r="4.5" fill="#0040ff"/>
<circle cx="715.00" cy="1181.19" r="4.5" fill="#0040ff"/>
<circle cx="717.60" cy="1180.19" r="4.5" fill="#0040ff"/>
<circle cx="722.80" cy="1178.17" r="4.5" fill="#0040ff"/>
<circle cx="733.20" cy="1174.14" r="4.5" fill="#0040ff"/>
<circle cx="753.30" cy="1166.35" r="4.5" fill="#0040ff"/>
<circle cx="793.60" cy="1150.74" r="4.5" fill="#0040ff"/>
<circle cx="874.40" cy="1119.43" r="4.5" fill="#0040ff"/>
<circle cx="975.40" cy="1080.30" r="4.5" fill="#0040ff"/>
<circle cx="1076.40" cy="1041.16" r="4.5" fill="#0040ff"/>
<circle cx="1177.30" cy="1002.06" r="4.5" fill="#0040ff"/>
<circle cx="1229.40" cy="981.88" r="4.5" fill="#0040ff"/>
<circle cx="1330.20" cy="981.80" r="4.5" fill="#0040ff"/>
<circle cx="1431.30" cy="981.80" r="4.5" fill="#0040ff"/>
<circle cx="1532.30" cy="981.80" r="4.5" fill="#0040ff"/>
<polyline points="403.00,1198.90 410.10,1198.90 511.00,1198.90 611.90,1198.90 712.40,1198.90 713.70,1198.31 715.00,1197.72 717.60,1196.55 722.80,1194.20 733.20,1189.50 753.30,1180.41 793.60,1162.19 874.40,1125.67 975.40,1080.01 1076.40,1034.35 1177.30,988.74 1229.40,965.19 1330.20,965.10 1431.30,965.10 1532.30,965.10 1539.00,965.10" fill="none" stroke="#ff4000" stroke-width="2" stroke-linejoin="round"/>
<circle cx="410.10" cy="1198.90" r="4.5" fill="#ff4000"/>
<circle cx="511.00" cy="1198.90" r="4.5" fill="#ff4000"/>
<circle cx="611.90" cy="1198.90" r="4.5" fill="#ff4000"/>
<circle cx="712.40" cy="1198.90" r="4.5" fill="#ff4000"/>
<circle cx="713.70" cy="1198.31" r="4.5" fill="#ff4000"/>
<circle cx="715.00" cy="1197.72" r="4.5" fill="#ff4000"/>
<circle cx="717.60" cy="1196.55" r="4.5" fill="#ff4000"/>
<circle cx="722.80" cy="1194.20" r="4.5" fill="#ff4000"/>
<circle cx="733.20" cy="1189.50" r="4.5" fill="#ff4000"/>
<circle cx="753.30" cy="1180.41" r="4.5" fill="#ff4000"/>
<circle cx="793.60" cy="1162.19" r="4.5" fill="#ff4000"/>
<circle cx="874.40" cy="1125.67" r="4.5" fill="#ff4000"/>
<circle cx="975.40" cy="1080.01" r="4.5" fill="#ff4000"/>
<circle cx="1076.40" cy="1034.35" r="4.5" fill="#ff4000"/>
<circle cx="1177.30" cy="988.74" r="4.5" fill="#ff4000"/>
<circle cx="1229.40" cy="965.19" r="4.5" fill="#ff4000"/>
<circle cx="1330.20" cy="965.10" r="4.5" fill="#ff4000"/>
<circle cx="1431.30" cy="965.10" r="4.5" fill="#ff4000"/>
<circle cx="1532.30" cy="965.10" r="4.5" fill="#ff4000"/>
<line x1="404" y1="981.5" x2="1538" y2="981.5" stroke="#6c6c6c" stroke-width="1" stroke-dasharray="3 3"/>
<line x1="404" y1="1015.5" x2="1538" y2="1015.5" stroke="#6c6c6c" stroke-width="1" stroke-dasharray="3 3"/>
<line x1="404" y1="1048.5" x2="1538" y2="1048.5" stroke="#6c6c6c" stroke-width="1" stroke-dasharray="3 3"/>
<line x1="404" y1="1082.5" x2="1538" y2="1082.5" stroke="#6c6c6c" stroke-width="1" stroke-dasharray="3 3"/>
<line x1="404" y1="1115.5" x2="1538" y2="1115.5" stroke="#6c6c6c" stroke-width="1" stroke-dasharray="3 3"/>
<line x1="404" y1="1148.5" x2="1538" y2="1148.5" stroke="#6c6c6c" stroke-width="1" stroke-dasharray="3 3"/>
<line x1="404" y1="1182.5" x2="1538" y2="1182.5" stroke="#6c6c6c" stroke-width="1" stroke-dasharray="3 3"/>
<line x1="506.5" y1="950" x2="506.5" y2="1215" stroke="#6c6c6c" stroke-width="1" stroke-dasharray="3 3"/>
<line x1="609.5" y1="950" x2="609.5" y2="1215" stroke="#6c6c6c" stroke-width="1" stroke-dasharray="3 3"/>
<line x1="713.5" y1="950" x2="713.5" y2="1215" stroke="#6c6c6c" stroke-width="1" stroke-dasharray="3 3"/>
<line x1="816.5" y1="950" x2="816.5" y2="1215" stroke="#6c6c6c" stroke-width="1" stroke-dasharray="3 3"/>
<line x1="919.5" y1="950" x2="919.5" y2="1215" stroke="#6c6c6c" stroke-width="1" stroke-dasharray="3 3"/>
<line x1="1023.5" y1="950" x2="1023.5" y2="1215" stroke="#6c6c6c" stroke-width="1" stroke-dasharray="3 3"/>
<line x1="1126.5" y1="950" x2="1126.5" y2="1215" stroke="#6c6c6c" stroke-width="1" stroke-dasharray="3 3"/>
<line x1="1229.5" y1="950" x2="1229.5" y2="1215" stroke="#6c6c6c" stroke-width="1" stroke-dasharray="3 3"/>
<line x1="1333.5" y1="950" x2="1333.5" y2="1215" stroke="#6c6c6c" stroke-width="1" stroke-dasharray="3 3"/>
<line x1="1436.5" y1="950" x2="1436.5" y2="1215" stroke="#6c6c6c" stroke-width="1" stroke-dasharray="3 3"/>
<line x1="712.5" y1="951" x2="712.5" y2="1215" stroke="#b4b4b4" stroke-width="2" stroke-dasharray="2 2"/>
<line x1="743.5" y1="951" x2="743.5" y2="1215" stroke="#b4b4b4" stroke-width="2" stroke-dasharray="2 2"/>
<line x1="403" y1="1216" x2="403" y2="1221" stroke="#d4d4d4" stroke-width="2"/>
<text x="403.00" y="1236.9" text-anchor="middle" font-family='"Liberation Sans", sans-serif' font-size="16.3" fill="#dcdcdc">1.000004ms</text>
<line x1="506.5" y1="1216" x2="506.5" y2="1221" stroke="#d4d4d4" stroke-width="2"/>
<text x="506.35" y="1236.9" text-anchor="middle" font-family='"Liberation Sans", sans-serif' font-size="16.3" fill="#dcdcdc">1.000006ms</text>
<line x1="609.5" y1="1216" x2="609.5" y2="1221" stroke="#d4d4d4" stroke-width="2"/>
<text x="609.70" y="1236.9" text-anchor="middle" font-family='"Liberation Sans", sans-serif' font-size="16.3" fill="#dcdcdc">1.000008ms</text>
<line x1="713.5" y1="1216" x2="713.5" y2="1221" stroke="#d4d4d4" stroke-width="2"/>
<text x="713.05" y="1236.9" text-anchor="middle" font-family='"Liberation Sans", sans-serif' font-size="16.3" fill="#dcdcdc">1.000010ms</text>
<line x1="816.5" y1="1216" x2="816.5" y2="1221" stroke="#d4d4d4" stroke-width="2"/>
<text x="816.40" y="1236.9" text-anchor="middle" font-family='"Liberation Sans", sans-serif' font-size="16.3" fill="#dcdcdc">1.000012ms</text>
<line x1="919.5" y1="1216" x2="919.5" y2="1221" stroke="#d4d4d4" stroke-width="2"/>
<text x="919.75" y="1236.9" text-anchor="middle" font-family='"Liberation Sans", sans-serif' font-size="16.3" fill="#dcdcdc">1.000014ms</text>
<line x1="1023.5" y1="1216" x2="1023.5" y2="1221" stroke="#d4d4d4" stroke-width="2"/>
<text x="1023.10" y="1236.9" text-anchor="middle" font-family='"Liberation Sans", sans-serif' font-size="16.3" fill="#dcdcdc">1.000016ms</text>
<line x1="1126.5" y1="1216" x2="1126.5" y2="1221" stroke="#d4d4d4" stroke-width="2"/>
<text x="1126.45" y="1236.9" text-anchor="middle" font-family='"Liberation Sans", sans-serif' font-size="16.3" fill="#dcdcdc">1.000018ms</text>
<line x1="1229.5" y1="1216" x2="1229.5" y2="1221" stroke="#d4d4d4" stroke-width="2"/>
<text x="1229.80" y="1236.9" text-anchor="middle" font-family='"Liberation Sans", sans-serif' font-size="16.3" fill="#dcdcdc">1.000020ms</text>
<line x1="1333.5" y1="1216" x2="1333.5" y2="1221" stroke="#d4d4d4" stroke-width="2"/>
<text x="1333.15" y="1236.9" text-anchor="middle" font-family='"Liberation Sans", sans-serif' font-size="16.3" fill="#dcdcdc">1.000022ms</text>
<line x1="1436.5" y1="1216" x2="1436.5" y2="1221" stroke="#d4d4d4" stroke-width="2"/>
<text x="1436.50" y="1236.9" text-anchor="middle" font-family='"Liberation Sans", sans-serif' font-size="16.3" fill="#dcdcdc">1.000024ms</text>
<line x1="1539" y1="1216" x2="1539" y2="1221" stroke="#d4d4d4" stroke-width="2"/>
<text x="1539.85" y="1236.9" text-anchor="middle" font-family='"Liberation Sans", sans-serif' font-size="16.3" fill="#dcdcdc">1.000026ms</text>
<line x1="404" y1="1155.5" x2="1538" y2="1155.5" stroke="#8a8a8a" stroke-width="1" stroke-dasharray="1 3"/>
<rect x="339" y="1058" width="32" height="1" fill="url(#dw)"/><rect x="339" y="1108" width="32" height="1" fill="url(#dw)"/><rect x="339" y="1058" width="1" height="51" fill="url(#dw)"/><rect x="370" y="1058" width="1" height="51" fill="url(#dw)"/>
<rect x="378.4" y="1116.4" width="21.3" height="85.6" fill="#ff0000"/>
<rect x="378" y="1116" width="22" height="1" fill="url(#dc)"/><rect x="378" y="1195" width="22" height="1" fill="url(#dc)"/><rect x="378" y="1116" width="1" height="80" fill="url(#dc)"/><rect x="399" y="1116" width="1" height="80" fill="url(#dc)"/>
<text x="0" y="0" transform="translate(394.8,1156.3) rotate(-90)" text-anchor="middle" font-family='"Liberation Sans", sans-serif' font-size="15" fill="#fff" textLength="64" lengthAdjust="spacingAndGlyphs">-4.40773V</text>
<rect x="668.8" y="1219.5" width="133.7" height="16.3" fill="#ff0000"/>
<rect x="683" y="1219" width="119" height="1" fill="url(#dc)"/><rect x="683" y="1236" width="119" height="1" fill="url(#dc)"/><rect x="683" y="1219" width="1" height="18" fill="url(#dc)"/><rect x="801" y="1219" width="1" height="18" fill="url(#dc)"/>
<text x="743.8" y="1233.5" text-anchor="middle" font-family='"Liberation Sans", sans-serif' font-size="15" fill="#fff" textLength="100.5" lengthAdjust="spacingAndGlyphs">1.000010592ms</text>
<text x="676.5" y="1233.5" font-family='"Liberation Sans", sans-serif' font-size="15" fill="#fff">1</text>
<rect x="320" y="940" width="1268" height="1" fill="url(#dw)"/><rect x="320" y="1242" width="1268" height="1" fill="url(#dw)"/><rect x="320" y="940" width="1" height="303" fill="url(#dw)"/><rect x="1587" y="940" width="1" height="303" fill="url(#dw)"/>
</g>
</svg>
</body></html>
